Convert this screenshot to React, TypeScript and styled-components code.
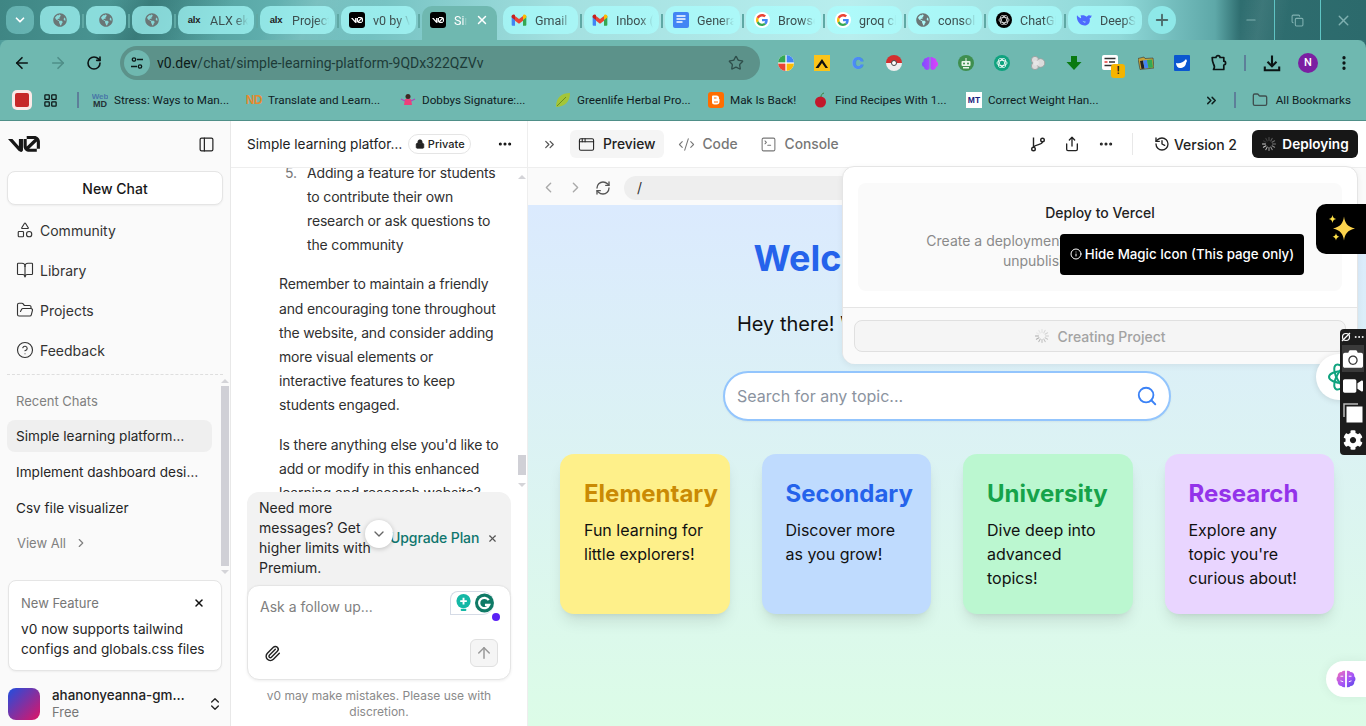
import React from "react";
import styled, { createGlobalStyle } from "styled-components";
import {
  ArrowLeft, ArrowRight, RotateCw, Star, Plus, Minus, X, Copy, EllipsisVertical,
  LayoutGrid, ChevronsRight, Folder, Shapes, BookOpen, FolderOpen, CircleHelp, PanelLeft, ChevronRight,
  ChevronLeft, ChevronsUpDown, ChevronDown, Paperclip, ArrowUp, CodeXml, SquareTerminal, AppWindow, Share,
  Ellipsis, History, RefreshCw, Lock, Search, Info, ChevronDown as Chevron,
} from "lucide-react";
import { FaGlobeAmericas, FaCog, FaCamera, FaVideo } from "react-icons/fa";

const Global = createGlobalStyle`
  html, body { margin: 0; padding: 0; background: #fff; }
  body { font-family: Inter, "Liberation Sans", sans-serif; color: #171717; }
  * { box-sizing: border-box; }
`;

const Page = styled.div`
  width: 1366px; height: 726px; overflow: hidden; display: flex; flex-direction: column;
`;

/* ---------- browser chrome ---------- */
const Chrome = styled.header`
  height: 121px; flex: none; display: flex; flex-direction: column;
  font-family: Roboto, "Noto Sans", sans-serif;
  background: linear-gradient(90deg, #4f9c9a 0, #6fb8b0 20px, #6fb8b0 1340px, #2c6a6c 1366px);
`;
const Strip = styled.div`
  height: 40px; flex: none; display: flex; align-items: flex-start; padding: 6px 0 0 6px; gap: 6px; position: relative;
  background:
    linear-gradient(115deg, transparent 0 8%, rgba(20,70,70,.35) 11%, transparent 17%),
    linear-gradient(115deg, transparent 0 20%, rgba(255,255,255,.12) 23%, transparent 28%),
    linear-gradient(100deg, transparent 0 90.500%, rgba(255,255,255,.07) 92%, transparent 94%),
    linear-gradient(90deg, #3f8684 0, #4f9c9a 170px, #6cbcbc 340px, #a3e0e0 560px, #b8eeee 850px, #8fd8d8 1120px, #5ea8a8 1215px, #2f6e70 1240px, #2c6a6c 1366px);
`;
const RoundBtn = styled.div<{ $w?: number }>`
  width: ${(p) => p.$w ?? 28}px; height: 28px; border-radius: 10px; flex: none;
  display: flex; align-items: center; justify-content: center; color: #fff;
  background: rgba(170,255,255,.35);
`;
const PlusBtn = styled(RoundBtn)`
  border-radius: 50%; color: #4d6a6a; background: #8ee8e8;
`;
const Tab = styled.div<{ $w: number; $sep?: boolean }>`
  width: ${(p) => p.$w}px; height: 28px; border-radius: 10px; flex: none; position: relative;
  display: flex; align-items: center; padding-left: 8px; gap: 8px;
  background: rgba(170,255,255,.68); font-size: 12.500px; color: #3d4f4f;
  &::after {
    content: ""; display: ${(p) => (p.$sep ? "block" : "none")}; position: absolute; right: -4px; top: 8px;
    width: 2px; height: 14px; background: #5fa8a4;
  }
`;
const TabIconCell = styled.span<{ $wide?: boolean }>`
  width: ${(p) => (p.$wide ? "24px" : "16px")}; display: flex; justify-content: center; flex: none;
`;
const TabLabel = styled.span`
  flex: 1; min-width: 0; overflow: hidden; white-space: nowrap; margin-right: 6px;
  -webkit-mask-image: linear-gradient(90deg, #000 65%, transparent 100%);
  mask-image: linear-gradient(90deg, #000 65%, transparent 100%);
`;
const ActiveLabel = styled(TabLabel)`
  margin-right: 0;
`;
const ActiveTab = styled.div`
  width: 75px; height: 34px; flex: none; display: flex; align-items: center; padding: 0 8px 6px 8px; gap: 8px;
  background: #6fb8b0; border-radius: 10px 10px 0 0; font-size: 12.500px; color: #fff;
`;
const WindowControls = styled.div`
  position: absolute; right: 0; top: 0; display: flex; height: 40px;
`;
const WinBtn = styled.div<{ $line?: boolean }>`
  width: 46px; height: 40px; display: flex; align-items: center; justify-content: center;
  color: #7fb0b0; border-left: ${(p) => (p.$line ? "1px solid #5fc4c4" : "0")};
`;
const Toolbar = styled.div`
  height: 41px; flex: none; display: flex; align-items: center; padding: 5px 4px 0 4px;
  background: #6fb8b0; border-radius: 8px 8px 0 0;
`;
const NavIcon = styled.div<{ $dim?: boolean }>`
  width: 36px; height: 36px; flex: none; display: flex; align-items: center; justify-content: center;
  color: ${(p) => (p.$dim ? "#4f8e88" : "#0b1414")};
`;
const GridIcon = styled(NavIcon)`
  width: 46px; height: 20px; margin: 0 4px 0 -5px;
`;
const Omnibox = styled.div`
  width: 640px; height: 34px; margin-left: 8px; flex: none; border-radius: 17px; background: #5c928a;
  display: flex; align-items: center; padding: 0 16px 0 4px; font-size: 14px; color: #0c1a18;
`;
const SiteBtn = styled.div`
  width: 26px; height: 26px; border-radius: 50%; background: #6fb8b0; display: flex; align-items: center;
  justify-content: center; margin-right: 7px; flex: none;
`;
const OmniText = styled.span`
  flex: 1;
  span { color: #1d3b38; }
`;
const Exts = styled.div`
  display: flex; margin-left: 8px;
`;
const ExtSlot = styled.div`
  width: 36px; height: 36px; flex: none; display: flex; align-items: center; justify-content: center; position: relative;
`;
const ToolSep = styled.div`
  width: 2px; height: 16px; background: #5d7f99; flex: none; margin: 0 8px;
`;
const Badge = styled.div`
  position: absolute; right: 3px; bottom: 3px; width: 14px; height: 14px; border-radius: 3px; background: #f5b400;
  font: 700 10px/14px Roboto, sans-serif; text-align: center; color: #222;
`;
const Avatar = styled.div`
  width: 20px; height: 20px; border-radius: 50%; background: #7b1fa2; color: #fff;
  font: 500 11px/20px Roboto, sans-serif; text-align: center;
`;
const Bookmarks = styled.div`
  height: 40px; flex: none; display: flex; align-items: center; padding: 0 0 1px 12px; font-size: 11.700px; color: #10201f;
  border-bottom: 1px solid #4f8f88; background: #6fb8b0; white-space: nowrap;
`;
const RecBtn = styled.div`
  width: 20px; height: 20px; border-radius: 5px; background: #fbe9e7; display: flex; align-items: center; justify-content: center; flex: none;
  &::after { content: ""; width: 14px; height: 14px; border-radius: 2px; background: #c62828; }
`;
const BarSep = styled.div`
  width: 2px; height: 16px; background: #5d7f99; flex: none; margin-right: 13px;
`;
const Mark = styled.div<{ $w: number }>`
  width: ${(p) => p.$w}px; flex: none; display: flex; align-items: center; gap: 6px;
`;
const MarkIcon = styled.div`
  width: 16px; height: 16px; flex: none; display: flex; align-items: center; justify-content: center; overflow: hidden;
`;
const BmGrow = styled.div`
  flex: 1; display: flex; align-items: center; justify-content: flex-end; padding-right: 15px;
`;
const MoreMarks = styled(ChevronsRight)`
  margin-right: 15px;
`;
const AllFolder = styled(Folder)`
  margin: 0 8px 0 3px;
`;

/* ---------- app ---------- */
const Main = styled.main`
  flex: 1; min-height: 0; display: flex;
`;
const Sidebar = styled.aside`
  width: 231px; flex: none; background: #fafafa; border-right: 1px solid #e8e8e8; display: flex; flex-direction: column;
  position: relative;
`;
const SideHead = styled.div`
  height: 44px; margin: 1px 0 5px; padding: 0 15px 0 8px; display: flex; align-items: center; justify-content: space-between; flex: none;
`;
const NewChat = styled.button`
  display: block; width: 216px; height: 34px; margin: 0 0 5px 7px; border: 1px solid #e5e5e5; border-radius: 8px; background: #fff; flex: none;
  font: 500 14px Inter, sans-serif; color: #171717; box-shadow: 0 1px 2px rgba(0,0,0,.05); padding: 0;
`;
const NavItem = styled.div`
  height: 40px; flex: none; display: flex; align-items: center; gap: 6px; padding-left: 16px; font-size: 14px; color: #333;
`;
const Dashed = styled.div`
  margin: 4px 7px 0; border-top: 1px dashed #dedede; flex: none;
`;
const SectionTitle = styled.div`
  margin: 18px 0 11px 16px; height: 16px; flex: none; font-size: 13px; line-height: 16px; color: #808080;
`;
const ChatItem = styled.div<{ $active?: boolean }>`
  height: 32px; flex: none; margin: 0 18px 4px 7px; padding: 0 9px; border-radius: 8px; display: flex; align-items: center;
  font-size: 13.600px; color: #262626; background: ${(p) => (p.$active ? "#efefef" : "transparent")}; white-space: nowrap;
`;
const ViewAll = styled.div`
  margin: 7px 0 0 17px; height: 16px; flex: none; display: flex; align-items: center; gap: 8px; font-size: 13px; color: #808080;
`;
const ScrollThumb = styled.div<{ $t: number; $h: number; $l: number }>`
  position: absolute; left: ${(p) => p.$l}px; top: ${(p) => p.$t}px; height: ${(p) => p.$h}px; width: 8px; background: #d0d0d6;
`;
const ScrollArrow = styled.div<{ $t: number; $l: number; $up?: boolean }>`
  position: absolute; left: ${(p) => p.$l}px; top: ${(p) => p.$t}px; width: 0; height: 0;
  border-left: 4px solid transparent; border-right: 4px solid transparent;
  ${(p) => (p.$up ? "border-bottom: 4px solid #d4d4d8;" : "border-top: 4px solid #d4d4d8;")}
`;
const FeatureCard = styled.div`
  margin: 29px 8px 0; height: 91px; border: 1px solid #e5e5e5; border-radius: 8px; background: #fff; padding: 14px 12px 0;
  box-shadow: 0 1px 2px rgba(0,0,0,.05); flex: none;
`;
const FeatureHead = styled.div`
  display: flex; align-items: center; justify-content: space-between; padding-right: 4px; font-size: 13px; color: #777; height: 16px;
`;
const FeatureText = styled.div`
  margin-top: 9px; font-size: 13.700px; line-height: 19.500px; color: #262626; white-space: nowrap;
`;
const UserRow = styled.div`
  margin-top: 16px; padding: 0 7px 0 8px; display: flex; align-items: center; gap: 12px; flex: none;
`;
const UserPic = styled.div`
  width: 32px; height: 32px; border-radius: 8px; flex: none; background: linear-gradient(135deg, #1f4fe0, #e01365);
`;
const UserText = styled.div`
  flex: 1; min-width: 0; display: flex; flex-direction: column;
`;
const UserName = styled.div`
  font-size: 13.400px; font-weight: 500; line-height: 17px; white-space: nowrap; color: #222;
`;
const UserPlan = styled.div`
  font-size: 13px; line-height: 16px; color: #777;
`;

const ChatCol = styled.section`
  width: 297px; flex: none; border-right: 1px solid #eee; display: flex; flex-direction: column; position: relative; background: #fff;
`;
const ChatHead = styled.div`
  height: 47px; flex: none; display: flex; align-items: center; padding: 0 14px 0 16px; border-bottom: 1px solid #eee; font-size: 13.600px; color: #222;
  white-space: nowrap;
`;
const Pill = styled.div`
  margin-left: 6px; width: 63px; height: 20px; border: 1px solid #e5e5e5; border-radius: 10px; font-size: 11px; font-weight: 500;
  display: flex; align-items: center; justify-content: center; gap: 3px; color: #222; flex: none;
`;
const HeadDots = styled.div`
  margin-left: auto; display: flex; align-items: center; color: #111;
`;
const Messages = styled.div`
  flex: 1; min-height: 0; overflow: hidden; font-size: 14px; line-height: 24.200px; letter-spacing: -.16px; color: #303030; padding: 0 27px 0 48px;
`;
const ListRow = styled.div`
  display: flex; margin-top: -7.500px; margin-left: 6px;
  b { font-weight: 400; color: #777; width: 22px; flex: none; }
`;
const Para = styled.p`
  margin: 15px 0 0;
`;
const Banner = styled.div`
  margin: 0 16px; height: 103px; flex: none; background: #f2f2f2; border-radius: 12px 12px 0 0; display: flex;
  padding: 6px 12px; font-size: 14px; line-height: 20px; color: #262626;
`;
const BannerText = styled.div`
  width: 121px; flex: none;
`;
const Upgrade = styled.div`
  margin-left: 10px; align-self: flex-start; margin-top: 30px; font-weight: 500; letter-spacing: -.1px; color: #0f766e; white-space: nowrap;
  display: flex; align-items: center; gap: 8px;
`;
const ScrollDown = styled.div`
  position: absolute; left: 134px; top: 399px; width: 28px; height: 28px; border-radius: 50%; background: #fff;
  box-shadow: 0 1px 5px rgba(0,0,0,.22); display: flex; align-items: center; justify-content: center; color: #666;
`;
const Composer = styled.div`
  margin: -10px 16px 0; height: 95px; flex: none; background: #fff; border: 1px solid #e5e5e5; border-radius: 12px; position: relative;
  box-shadow: 0 1px 3px rgba(0,0,0,.07); padding: 13px 12px; font-size: 14px; line-height: 16px; color: #808080;
`;
const ComposerBar = styled.div`
  position: absolute; left: 16px; right: 12px; bottom: 12px; display: flex; align-items: center; justify-content: space-between; color: #222;
`;
const SendBtn = styled.div`
  width: 28px; height: 28px; border-radius: 6px; background: #f5f5f5; border: 1px solid #e0e0e0; color: #999; display: flex; align-items: center; justify-content: center;
`;
const Grammarly = styled.div`
  position: absolute; left: 202px; top: 5px; width: 44px; height: 24px; border: 1px solid #d5dbe6; border-right: 0; border-radius: 8px 12px 12px 0;
  background: #fff; display: flex; align-items: center; gap: 3px; padding-left: 4px;
`;
const Dot = styled.div`
  position: absolute; left: 244px; top: 27px; width: 8px; height: 8px; border-radius: 50%; background: #5b21f5;
`;
const Disclaimer = styled.div`
  flex: none; height: 46px; padding: 8px 24px 0; text-align: center; font-size: 12px; line-height: 16px; color: #8a8a8a;
`;

const Preview = styled.section`
  flex: 1; min-width: 0; display: flex; flex-direction: column; position: relative;
`;
const PreviewHead = styled.div`
  height: 46px; flex: none; display: flex; align-items: center; padding: 0 8px 0 14px; background: #fff; font-size: 14px;
`;
const Tabs = styled.div`
  display: flex; align-items: center; margin-left: 13px; flex: 1;
`;
const ViewTab = styled.div<{ $on?: boolean }>`
  height: 28px; border-radius: 6px; padding: 0 8px; display: flex; align-items: center; gap: 8px; margin-right: 6px; font-weight: 500; font-size: 13.800px;
  background: ${(p) => (p.$on ? "#f5f5f5" : "transparent")}; color: ${(p) => (p.$on ? "#222" : "#777")};
`;
const IconBtn = styled.div`
  width: 34px; display: flex; justify-content: center; color: #222;
`;
const VSep = styled.div`
  width: 1px; height: 22px; background: #e8e8e8; margin: 0 21px 0 9px;
`;
const VersionBtn = styled.div`
  display: flex; align-items: center; gap: 4px; font-weight: 500; color: #222; margin-right: 15px;
`;
const DeployBtn = styled.div`
  width: 106px; height: 28px; border-radius: 6px; background: #171717; color: #fff; font-weight: 600; font-size: 13.600px; display: flex; align-items: center; justify-content: center; gap: 5px;
`;
const AddrBar = styled.div`
  height: 38px; flex: none; background: #fafafa; border-top: 1px solid #eee; display: flex; align-items: center; padding: 2px 12px 0 7px;
`;
const UrlPill = styled.div`
  flex: 1; height: 24px; border-radius: 12px; background: #eee; padding-left: 13px; margin-left: 8px; font-size: 14px; line-height: 24px; color: #333;
`;
const AddrBtn = styled.div<{ $dark?: boolean }>`
  width: 27px; display: flex; justify-content: center; color: ${(p) => (p.$dark ? "#555" : "#aaa")};
`;
const Canvas = styled.div`
  flex: 1; min-height: 0; background: linear-gradient(180deg, #dbeafe, #dcfce7); display: flex; flex-direction: column; align-items: center; padding: 33px 32px 0;
  overflow: hidden;
`;
const Hero = styled.h1`
  margin: 0 0 0 6px; font-size: 36px; line-height: 40px; font-weight: 700; color: #2563eb; white-space: nowrap;
`;
const Sub = styled.p`
  margin: 32px 0 0; font-size: 20px; line-height: 28px; color: #111; white-space: nowrap;
`;
const SearchBox = styled.div`
  margin: 33px 0 0; width: 448px; height: 50px; flex: none; border: 2px solid #93c5fd; border-radius: 25px; background: #fff; display: flex; align-items: center;
  justify-content: space-between; padding: 0 11px 0 12px; font-size: 16px; color: #8b93a0;
  box-shadow: 0 1px 2px rgba(0,0,0,.05);
`;
const Cards = styled.div`
  margin-top: 33px; width: 100%; display: grid; grid-template-columns: repeat(4, minmax(0, 1fr)); gap: 32px;
`;
const Card = styled.div<{ $bg: string; $fg: string }>`
  height: 160px; border-radius: 14px; padding: 24px; background: ${(p) => p.$bg};
  box-shadow: 0 10px 15px -3px rgba(0,0,0,.1), 0 4px 6px -4px rgba(0,0,0,.1);
  h3 { margin: 0 0 8px; font-size: 24px; line-height: 32px; font-weight: 700; color: ${(p) => p.$fg}; white-space: nowrap; }
  p { margin: 0; font-size: 16px; line-height: 24px; color: #111; }
`;
const Popover = styled.div`
  position: absolute; right: 8px; top: 45px; width: 516px; height: 198px; background: #fff; border: 1px solid #e5e5e5; border-radius: 12px 12px 0 12px;
  box-shadow: 0 2px 6px rgba(0,0,0,.06); display: flex; flex-direction: column;
`;
const PopBody = styled.div`
  margin: 16px 15px; height: 108px; flex: none; border-radius: 8px; background: #fafafa; display: flex; flex-direction: column; align-items: center; padding-top: 21px;
  text-align: center;
`;
const PopTitle = styled.div`
  font-size: 14px; font-weight: 500; line-height: 17px; color: #222;
`;
const PopText = styled.div`
  margin-top: 10px; width: 360px; font-size: 14px; line-height: 20px; color: #8a8a8a; white-space: nowrap;
`;
const PopFoot = styled.div`
  flex: 1; border-top: 1px solid #e5e5e5; padding: 12px 11px; background: #fafafa; border-radius: 0 0 12px 12px;
`;
const PopBtn = styled.div`
  height: 32px; border: 1px solid #e0e0e0; border-radius: 8px; background: #f5f5f5; display: flex; align-items: center; justify-content: center; gap: 7px;
  font-size: 14px; font-weight: 500; color: #a3a3a3;
`;
const Tip = styled.div`
  position: absolute; left: 532px; top: 113px; width: 244px; height: 41px; padding-bottom: 1px; background: #000; border-radius: 4px; color: #fff; font-size: 13.300px; font-weight: 500;
  display: flex; align-items: center; justify-content: center; gap: 3px; white-space: nowrap;
`;
const Magic = styled.div`
  position: absolute; right: 0; top: 83px; width: 50px; height: 50px; background: #000; border-radius: 10px 0 0 10px; display: flex; align-items: center; padding-left: 11px;
`;
const SideOrb = styled.div`
  position: absolute; right: 0; top: 233px; width: 50px; height: 46px; border-radius: 23px 0 0 23px; background: #fff; box-shadow: 0 1px 6px rgba(0,0,0,.12);
  display: flex; align-items: center; padding-left: 10px; overflow: hidden;
`;
const ToolDock = styled.div`
  position: absolute; right: 0; top: 208px; width: 26px; height: 126px; background: #1c1c1c; border-radius: 4px 0 0 4px; color: #fff;
  display: flex; flex-direction: column; align-items: center;
`;
const DockTop = styled.div`
  height: 16px; flex: none; display: flex; align-items: center; gap: 2px; color: #fff;
`;
const DockBtn = styled.div<{ $on?: boolean }>`
  width: 22px; height: 27px; flex: none; display: flex; align-items: center; justify-content: center; background: ${(p) => (p.$on ? "#3a3a3a" : "transparent")};
`;
const BrainBtn = styled.div`
  position: absolute; right: 0; top: 540px; width: 40px; height: 36px; border-radius: 18px 0 0 18px; background: #fff; display: flex; align-items: center; padding-left: 9px;
  box-shadow: 0 0 12px rgba(0,0,0,.06);
`;

/* ---------- drawings ---------- */
const V0 = ({ w = 16, color = "#000" }: { w?: number; color?: string }) => (
  <svg width={w} viewBox="0 0 40 20" fill={color}>
    <path d="M23.39 0h9.53c3.86 0 6.99 3.13 6.99 7v9.08h-3.91V7c0-.09 0-.18-.01-.28l-9.53 9.36h.1h9.44v3.7h-9.44c-3.86 0-7.08-3.16-7.08-7.03V3.69h3.91v9.06c0 .18.01.35.04.52l9.74-9.57c-.08-.01-.17-.01-.25-.01h-9.53z" />
    <path d="M13.77 19.1L0 3.69h5.54l8.08 9.05V3.69h5.1v13.88c0 2.1-2.6 3.08-3.99 1.52z" />
  </svg>
);
const Fav16 = styled.div`
  width: 16px; height: 16px; flex: none; display: flex; align-items: center; justify-content: center; background: #000; border-radius: 3px;
`;
const V0Fav = () => <Fav16><V0 w={12} color="#fff" /></Fav16>;
const AlxFav = styled.span`
  width: 16px; flex: none; font: 800 9.500px/16px "Liberation Sans", sans-serif; color: #222; text-align: center; letter-spacing: -.3px;
`;
const GlobeFav = () => <FaGlobeAmericas size={14} color="#6a7676" />;
const Gmail = () => (
  <svg width="16" height="16" viewBox="0 0 24 24">
    <path fill="#4285F4" d="M1 6v13c0 1 .7 1.700 1.600 1.700H6V11z" />
    <path fill="#34A853" d="M23 6v13c0 1-.7 1.700-1.600 1.700H18V11z" />
    <path fill="#EA4335" d="M6 13V6l6 4.600L18 6v7l-6 4.600z" />
    <path fill="#C5221F" d="M1 6.300C1 4 3.600 2.800 5.300 4.100L6 4.700V12L1 8.300z" />
    <path fill="#FBBC04" d="M23 6.300C23 4 20.400 2.800 18.700 4.100L18 4.700V12l5-3.700z" />
  </svg>
);
const GFav = () => (
  <svg width="16" height="16" viewBox="0 0 48 48">
    <circle cx="24" cy="24" r="24" fill="#fff" />
    <g transform="translate(6 6) scale(.75)">
      <path fill="#EA4335" d="M24 9.500c3.500 0 6.700 1.200 9.200 3.600l6.900-6.900C35.900 2.400 30.500 0 24 0 14.600 0 6.500 5.400 2.600 13.200l8 6.200C12.400 13.700 17.700 9.500 24 9.500z" />
      <path fill="#4285F4" d="M46.900 24.500c0-1.600-.1-3.100-.4-4.500H24v9h12.900c-.6 3-2.200 5.500-4.700 7.200l7.700 6c4.500-4.200 7-10.300 7-17.700z" />
      <path fill="#FBBC05" d="M10.500 28.600c-.5-1.400-.8-3-.8-4.600s.3-3.200.8-4.600l-8-6.200C.9 16.500 0 20.100 0 24s.9 7.500 2.600 10.800z" />
      <path fill="#34A853" d="M24 48c6.500 0 11.900-2.100 15.900-5.800l-7.700-6c-2.200 1.400-4.900 2.300-8.200 2.300-6.300 0-11.600-4.200-13.500-10l-8 6.200C6.500 42.600 14.600 48 24 48z" />
    </g>
  </svg>
);
const DocsFav = () => (
  <svg width="16" height="16" viewBox="0 0 16 16">
    <rect width="16" height="16" rx="2" fill="#4285f4" />
    <path d="M3.500 4h9M3.500 7h9M3.500 10h6" stroke="#fff" strokeWidth="1.400" />
  </svg>
);
const KnotFav = ({ bg, line }: { bg: string; line: string }) => (
  <svg width="16" height="16" viewBox="0 0 16 16">
    <circle cx="8" cy="8" r="8" fill={bg} />
    <g fill="none" stroke={line} strokeWidth=".8">
      <ellipse cx="8" cy="8" rx="5" ry="2.600" />
      <ellipse cx="8" cy="8" rx="5" ry="2.600" transform="rotate(60 8 8)" />
      <ellipse cx="8" cy="8" rx="5" ry="2.600" transform="rotate(120 8 8)" />
    </g>
  </svg>
);
const Whale = () => (
  <svg width="16" height="14" viewBox="0 0 24 20" fill="#4d6bfe">
    <path d="M23 3c-.6-.3-1 .3-1.400.6-.4-.5-1-.8-1.600-.8-1.500 0-3 1-4 2.300C14 3 10 2 6.500 3.500 8 5 8 6.500 7 7.500 5 6.500 3 5 1.500 3 .5 8 3 15 9 17.500c4 1.600 9 .5 11-3.500 1-2 1-4.500.5-7 1 .2 2-.4 2.500-2 .2-.8.2-2 0-2.500zM13.500 14c-1.500-.6-3-1.800-4-3 2 1 4 1.600 5.500 1.400z" />
  </svg>
);
const Spinner = ({ size = 16, color = "#fff" }: { size?: number; color?: string }) => (
  <svg width={size} height={size} viewBox="0 0 16 16" stroke={color} strokeWidth="1" strokeLinecap="round">
    {Array.from({ length: 12 }).map((_, i) => (
      <line key={i} x1="8" y1="1.500" x2="8" y2="4.500" opacity={0.12 + (i / 12) * 0.75} transform={`rotate(${i * 30 - 60} 8 8)`} />
    ))}
  </svg>
);
const Sparkles = () => (
  <svg width="30" height="30" viewBox="0 0 30 30" fill="#fde047">
    <path d="M17 2.500c1 7 3.500 10 11 12-7.500 2-10 5-11 12-1-7-3.500-10-11-12 7.500-2 10-5 11-12z" fill="#fcd34d" />
    <path d="M5.500 1c.4 2.400 1.300 3.400 3.700 4-2.400.6-3.300 1.600-3.700 4-.4-2.400-1.300-3.400-3.700-4 2.400-.6 3.300-1.600 3.700-4zM9 19c.4 2.300 1.200 3.200 3.400 3.800-2.200.6-3 1.500-3.400 3.800-.4-2.300-1.200-3.200-3.400-3.800 2.200-.6 3-1.500 3.400-3.800z" />
  </svg>
);
const BrainIcon = () => (
  <svg width="22" height="22" viewBox="0 0 24 24">
    <defs><linearGradient id="br" x1="0" x2="1" y1="0" y2="1"><stop offset="0" stopColor="#f472b6" /><stop offset=".55" stopColor="#a855f7" /><stop offset="1" stopColor="#4f46e5" /></linearGradient></defs>
    <path fill="url(#br)" d="M11 3a4 4 0 0 0-4 1.500A4 4 0 0 0 3 9a4 4 0 0 0 0 6 4 4 0 0 0 4 4.500A4 4 0 0 0 11 21zM13 3a4 4 0 0 1 4 1.500A4 4 0 0 1 21 9a4 4 0 0 1 0 6 4 4 0 0 1-4 4.500A4 4 0 0 1 13 21z" />
    <path d="M6 9h3M6 14l3 1M18 9h-3M18 14l-3 1" stroke="#fff" strokeWidth="1" />
  </svg>
);
const Atom = () => (
  <svg width="34" height="34" viewBox="0 0 34 34" fill="none" stroke="#10a37f" strokeWidth="2">
    <ellipse cx="17" cy="17" rx="14" ry="6" />
    <ellipse cx="17" cy="17" rx="14" ry="6" transform="rotate(60 17 17)" />
    <ellipse cx="17" cy="17" rx="14" ry="6" transform="rotate(120 17 17)" />
  </svg>
);
const GitFork = () => (
  <svg width="16" height="16" viewBox="0 0 16 16" fill="none" stroke="#222" strokeWidth="1.400">
    <circle cx="3.500" cy="13" r="1.800" />
    <circle cx="12.500" cy="4" r="1.800" />
    <path d="M3.500 1.500V11.200M12.500 5.800c0 3.500-7 2-9 5.400" />
  </svg>
);
const CopyStack = () => (
  <svg width="22" height="22" viewBox="0 0 22 22">
    <path d="M2 15V2h14" fill="none" stroke="#bbb" strokeWidth="1.500" />
    <rect x="4.500" y="4.500" width="16" height="16" fill="#fff" />
  </svg>
);
const DockLogo = () => (
  <svg width="10" height="10" viewBox="0 0 10 10" fill="none" stroke="#fff" strokeWidth="1.200">
    <circle cx="5" cy="5" r="3.500" /><path d="M1 9L9 1" />
  </svg>
);
const Bulb = () => (
  <svg width="18" height="20" viewBox="0 0 18 20">
    <circle cx="9" cy="8" r="7.500" fill="#14b8a6" />
    <path d="M9 4.500v7M5.500 8h7" stroke="#fff" strokeWidth="2" />
    <rect x="6" y="16" width="6" height="2.500" rx="1" fill="#14b8a6" />
  </svg>
);
const GrammarlyG = () => (
  <svg width="20" height="20" viewBox="0 0 20 20">
    <circle cx="10" cy="10" r="10" fill="#0f7a66" />
    <path d="M14.500 7A5.500 5.500 0 1 0 15 12h-4.500" fill="none" stroke="#fff" strokeWidth="2.400" />
  </svg>
);

/* toolbar extensions */
const ExtGoogle = () => (
  <svg width="16" height="16" viewBox="0 0 16 16">
    <clipPath id="c1"><circle cx="8" cy="8" r="8" /></clipPath>
    <g clipPath="url(#c1)">
      <rect width="16" height="16" fill="#fff" />
      <rect width="7.400" height="7.400" fill="#34a853" />
      <rect x="8.600" width="8" height="7.400" fill="#4285f4" />
      <rect y="8.600" width="7.400" height="8" fill="#ea4335" />
      <rect x="8.600" y="8.600" width="8" height="8" fill="#fbbc04" />
    </g>
  </svg>
);
const ExtYellow = () => (
  <svg width="16" height="16" viewBox="0 0 16 16">
    <rect width="16" height="16" fill="#fcc419" />
    <path d="M1.500 13L8 4l6 9h-2.500L8 8l-3.500 5z" fill="#111" />
  </svg>
);
const ExtC = styled.span`
  font: 900 16px/16px Inter, sans-serif; color: #4b8bf5;
`;
const ExtPoke = () => (
  <svg width="16" height="16" viewBox="0 0 16 16">
    <path d="M0 8a8 8 0 0 1 16 0z" fill="#d32f2f" />
    <path d="M0 8a8 8 0 0 0 16 0z" fill="#eee" />
    <circle cx="8" cy="8" r="2.500" fill="#fff" stroke="#444" />
  </svg>
);
const ExtBrain = () => (
  <svg width="16" height="16" viewBox="0 0 16 16">
    <defs><linearGradient id="eb" x1="0" x2="1"><stop offset="0" stopColor="#7c4dff" /><stop offset="1" stopColor="#e040fb" /></linearGradient></defs>
    <path fill="url(#eb)" d="M7.500 2a3 3 0 0 0-3 1 3 3 0 0 0-3 3.500A3 3 0 0 0 2 12a3 3 0 0 0 5.500 1.500zM8.500 2a3 3 0 0 1 3 1 3 3 0 0 1 3 3.500A3 3 0 0 1 14 12a3 3 0 0 1-5.500 1.500z" />
  </svg>
);
const ExtBot = () => (
  <svg width="16" height="16" viewBox="0 0 16 16">
    <circle cx="8" cy="8" r="8" fill="#3f8f4f" />
    <rect x="3.500" y="6" width="9" height="5" rx="1" fill="#e8f5e9" />
    <circle cx="6" cy="8.500" r="1" fill="#3f8f4f" /><circle cx="10" cy="8.500" r="1" fill="#3f8f4f" />
    <rect x="7.500" y="3" width="1" height="3" fill="#e8f5e9" />
    <rect x="5" y="12" width="6" height="1.500" fill="#e8f5e9" />
  </svg>
);
const ExtBlob = () => (
  <svg width="16" height="16" viewBox="0 0 16 16" fill="#dcdcdc" stroke="#9a9a9a" strokeWidth=".8">
    <circle cx="5" cy="5" r="3.600" />
    <circle cx="5" cy="11" r="3.600" />
    <circle cx="10.500" cy="8" r="4.300" />
    <circle cx="6" cy="8" r="2.800" fill="#e6e6e6" stroke="none" />
  </svg>
);
const ExtDown = () => (
  <svg width="16" height="16" viewBox="0 0 16 16"><path d="M5 1h6v6h4.500L8 15 .5 7H5z" fill="#0a7a12" /></svg>
);
const ExtList = () => (
  <svg width="16" height="16" viewBox="0 0 16 16">
    <rect width="16" height="15" rx="2" fill="#fff" />
    <path d="M2.500 3.500h11" stroke="#333" strokeWidth="1.500" /><path d="M2.500 7h3" stroke="#e53935" strokeWidth="1.500" /><path d="M7 7h6" stroke="#333" strokeWidth="1.500" /><path d="M2.500 10.500h8" stroke="#333" strokeWidth="1.500" />
  </svg>
);
const ExtFolder = () => (
  <svg width="16" height="16" viewBox="0 0 16 16">
    <path d="M0 3.500l6-1.500 1 1.500 8-.5 1 10-14 1.500z" fill="#c6a43a" stroke="#333" strokeWidth=".6" />
    <path d="M2 6l3-.5 1.500 8-3 .5z" fill="#222" /><path d="M5 5.500l4-.5 1.500 8-4 .5z" fill="#4285f4" /><path d="M9 5l5-.5 1 8-4.500.5z" fill="#34a853" />
  </svg>
);
const ExtBlue = () => (
  <svg width="16" height="16" viewBox="0 0 16 16">
    <rect width="16" height="16" rx="1" fill="#0b57d0" />
    <path d="M2 8c3 1 7 0 10-4l1 2-1 2c0 3-3 5-6 5-2 0-4-2-4-5z" fill="#fff" />
  </svg>
);
const ExtPuzzle = () => (
  <svg width="18" height="18" viewBox="0 0 18 18" fill="none" stroke="#0b1414" strokeWidth="1.700" strokeLinejoin="round">
    <path d="M3.200 3.500H7c0-2.600 4-2.600 4 0h3.800v3.700c2.400 0 2.400 3.800 0 3.800v4.500H4.500c1.200-1.700 1.200-3.600 0-5.500-.9-1.600-1.300-3.900-1.300-6.500z" />
  </svg>
);
const ChromeDownload = () => (
  <svg width="18" height="18" viewBox="0 0 18 18" fill="none" stroke="#0b1414" strokeWidth="2.100">
    <path d="M9 1.500v10.500M4.500 7.800L9 12.300l4.500-4.500M1.800 12.500v3.700h14.400v-3.700" />
  </svg>
);
const WebMd = styled.span`
  font: 700 8px/7px "Liberation Sans", sans-serif; color: #4a79a8; text-align: center; display: block;
  em { display: block; font-style: normal; color: #263238; font-size: 9px; line-height: 8px; }
`;
const Nd = styled.span`
  font: 700 12px/16px "Liberation Sans", sans-serif; color: #e58a2f; letter-spacing: -.5px;
`;
const Person = () => (
  <svg width="16" height="16" viewBox="0 0 16 16">
    <circle cx="8" cy="4.500" r="2.500" fill="#3e2723" /><path d="M5 7h6l1 6H4z" fill="#ec407a" /><path d="M1 7l4 2M15 7l-4 2" stroke="#ab47bc" strokeWidth="1.200" />
  </svg>
);
const Leaf = () => (
  <svg width="16" height="16" viewBox="0 0 16 16">
    <path d="M15 1C7 1 1 5 1 15c8 0 14-5 14-14z" fill="#a4c639" /><path d="M2 14L11 5" stroke="#6a8e1f" />
  </svg>
);
const Blogger = () => (
  <svg width="16" height="16" viewBox="0 0 16 16">
    <rect width="16" height="16" rx="3" fill="#ff6d00" />
    <path d="M5 3.500h3.500A2.500 2.500 0 0 1 11 6v1h.5v2.500a3 3 0 0 1-3 3h-2a2.500 2.500 0 0 1-2.500-2.500V4.500a1 1 0 0 1 1-1z" fill="#fff" />
    <path d="M6 6h2.500M6 10h4" stroke="#ff6d00" strokeWidth="1.200" />
  </svg>
);
const Cherry = () => (
  <svg width="16" height="16" viewBox="0 0 16 16">
    <circle cx="7.500" cy="10" r="5.500" fill="#c2182b" /><path d="M8 5c0-2 1-3.500 3-4" stroke="#3e7d3a" strokeWidth="1" fill="none" />
  </svg>
);
const Mt = styled.span`
  width: 16px; height: 16px; background: #fff; font: 800 8.500px/16px "Liberation Sans", sans-serif; text-align: center; color: #1a237e; display: block;
`;

const tabData: { w: number; label?: string; icon: React.ReactNode }[] = [
  { w: 40, icon: <GlobeFav /> },
  { w: 40, icon: <GlobeFav /> },
  { w: 40, icon: <GlobeFav /> },
  { w: 76, label: "ALX ekosystem", icon: <AlxFav>alx</AlxFav> },
  { w: 75, label: "Project Tasks", icon: <AlxFav>alx</AlxFav> },
  { w: 75, label: "v0 by Vercel", icon: <V0Fav /> },
];
const tabData2: { w: number; label: string; icon: React.ReactNode }[] = [
  { w: 75, label: "Gmail", icon: <Gmail /> },
  { w: 75, label: "Inbox (12)", icon: <Gmail /> },
  { w: 75, label: "General", icon: <DocsFav /> },
  { w: 75, label: "Browser", icon: <GFav /> },
  { w: 75, label: "groq cloud", icon: <GFav /> },
  { w: 74, label: "console", icon: <GlobeFav /> },
  { w: 74, label: "ChatGPT", icon: <KnotFav bg="#000" line="#ddd" /> },
  { w: 74, label: "DeepSeek", icon: <Whale /> },
];
const extensions: React.ReactNode[] = [
  <ExtGoogle />, <ExtYellow />, <ExtC>C</ExtC>, <ExtPoke />, <ExtBrain />, <ExtBot />, <KnotFav bg="#10a37f" line="#fff" />, <ExtBlob />, <ExtDown />,
  <><ExtList /><Badge>!</Badge></>, <ExtFolder />, <ExtBlue />, <ExtPuzzle />,
];
const marks: { w: number; icon: React.ReactNode; text: string }[] = [
  { w: 154, icon: <WebMd>Web<em>MD</em></WebMd>, text: "Stress: Ways to Man..." },
  { w: 154, icon: <Nd>ND</Nd>, text: "Translate and Learn..." },
  { w: 155, icon: <Person />, text: "Dobbys Signature:..." },
  { w: 153, icon: <Leaf />, text: "Greenlife Herbal Pro..." },
  { w: 105, icon: <Blogger />, text: "Mak Is Back!" },
  { w: 153, icon: <Cherry />, text: "Find Recipes With 1..." },
  { w: 150, icon: <Mt>MT</Mt>, text: "Correct Weight Han..." },
];
const cards = [
  { bg: "#fef08a", fg: "#ca8a04", t: "Elementary", d: "Fun learning for little explorers!" },
  { bg: "#bfdbfe", fg: "#2563eb", t: "Secondary", d: "Discover more as you grow!" },
  { bg: "#bbf7d0", fg: "#16a34a", t: "University", d: "Dive deep into advanced topics!" },
  { bg: "#e9d5ff", fg: "#9333ea", t: "Research", d: "Explore any topic you're curious about!" },
];

export default function App() {
  return (
    <Page>
      <Global />
      <Chrome>
        <Strip>
          <RoundBtn><Chevron size={14} strokeWidth={3} /></RoundBtn>
          {tabData.map((t, i) => (
            <Tab key={i} $w={t.w} $sep>
              <TabIconCell $wide={i < 3}>{t.icon}</TabIconCell>
              {t.label && <TabLabel>{t.label}</TabLabel>}
            </Tab>
          ))}
          <ActiveTab>
            <V0Fav />
            <ActiveLabel>Simple learning</ActiveLabel>
            <X size={14} color="#fff" strokeWidth={2.5} />
          </ActiveTab>
          {tabData2.map((t, i) => (
            <Tab key={i} $w={t.w} $sep={i < 7}>
              {t.icon}
              <TabLabel>{t.label}</TabLabel>
            </Tab>
          ))}
          <PlusBtn><Plus size={18} strokeWidth={2.5} /></PlusBtn>
          <WindowControls>
            <WinBtn><Minus size={14} /></WinBtn>
            <WinBtn $line><Copy size={13} /></WinBtn>
            <WinBtn $line><X size={17} /></WinBtn>
          </WindowControls>
        </Strip>
        <Toolbar>
          <NavIcon><ArrowLeft size={18} strokeWidth={2.2} /></NavIcon>
          <NavIcon $dim><ArrowRight size={18} strokeWidth={2.2} /></NavIcon>
          <NavIcon><RotateCw size={16} strokeWidth={2.4} /></NavIcon>
          <Omnibox>
            <SiteBtn>
              <svg width="14" height="14" viewBox="0 0 14 14" fill="none" stroke="#0c1a18" strokeWidth="1.300">
                <circle cx="4" cy="3.500" r="1.700" /><path d="M7 3.500h6M1 10.500h6" /><circle cx="10" cy="10.500" r="1.700" />
              </svg>
            </SiteBtn>
            <OmniText>v0.dev<span>/chat/simple-learning-platform-9QDx322QZVv</span></OmniText>
            <Star size={16} color="#2f4f4b" />
          </Omnibox>
          <Exts>
            {extensions.map((e, i) => <ExtSlot key={i}>{e}</ExtSlot>)}
          </Exts>
          <ToolSep />
          <ExtSlot><ChromeDownload /></ExtSlot>
          <ExtSlot><Avatar>N</Avatar></ExtSlot>
          <ExtSlot><EllipsisVertical size={18} color="#0b1414" strokeWidth={2.4} /></ExtSlot>
        </Toolbar>
        <Bookmarks>
          <RecBtn />
          <GridIcon><LayoutGrid size={15} strokeWidth={2} /></GridIcon>
          <BarSep />
          {marks.map((m) => (
            <Mark key={m.text} $w={m.w}>
              <MarkIcon>{m.icon}</MarkIcon>
              <span>{m.text}</span>
            </Mark>
          ))}
          <BmGrow>
            <MoreMarks size={15} color="#10201f" strokeWidth={2.4} />
            <BarSep />
            <AllFolder size={16} color="#3f4f4f" />
            <span>All Bookmarks</span>
          </BmGrow>
        </Bookmarks>
      </Chrome>

      <Main>
        <Sidebar>
          <SideHead>
            <V0 w={32} color="#171717" />
            <PanelLeft size={17} color="#222" strokeWidth={1.7} />
          </SideHead>
          <NewChat>New Chat</NewChat>
          <NavItem><Shapes size={18} strokeWidth={1.5} />Community</NavItem>
          <NavItem><BookOpen size={18} strokeWidth={1.5} />Library</NavItem>
          <NavItem><FolderOpen size={18} strokeWidth={1.5} />Projects</NavItem>
          <NavItem><CircleHelp size={18} strokeWidth={1.5} />Feedback</NavItem>
          <Dashed />
          <SectionTitle>Recent Chats</SectionTitle>
          <ChatItem $active>Simple learning platform…</ChatItem>
          <ChatItem>Implement dashboard desi…</ChatItem>
          <ChatItem>Csv file visualizer</ChatItem>
          <ViewAll>View All <ChevronRight size={14} /></ViewAll>
          <FeatureCard>
            <FeatureHead>New Feature <X size={12} color="#111" strokeWidth={3} /></FeatureHead>
            <FeatureText>v0 now supports tailwind<br />configs and globals.css files</FeatureText>
          </FeatureCard>
          <UserRow>
            <UserPic />
            <UserText>
              <UserName>ahanonyeanna-gm…</UserName>
              <UserPlan>Free</UserPlan>
            </UserText>
            <ChevronsUpDown size={16} color="#222" />
          </UserRow>
          <ScrollArrow $l={221} $t={258} $up />
          <ScrollThumb $l={221} $t={265} $h={180} />
          <ScrollArrow $l={221} $t={449} />
        </Sidebar>

        <ChatCol>
          <ChatHead>
            Simple learning platfor…
            <Pill><Lock size={10} fill="#222" />Private</Pill>
            <HeadDots><Ellipsis size={16} strokeWidth={2.6} /></HeadDots>
          </ChatHead>
          <Messages>
            <ListRow>
              <b>5.</b>
              <div>Adding a feature for students to contribute their own research or ask questions to the community</div>
            </ListRow>
            <Para>Remember to maintain a friendly and encouraging tone throughout the website, and consider adding more visual elements or interactive features to keep students engaged.</Para>
            <Para>Is there anything else you'd like to add or modify in this enhanced learning and research website?</Para>
          </Messages>
          <Banner>
            <BannerText>Need more messages? Get higher limits with Premium.</BannerText>
            <Upgrade>Upgrade Plan <X size={11} color="#555" strokeWidth={2.5} /></Upgrade>
          </Banner>
          <ScrollDown><ChevronDown size={16} /></ScrollDown>
          <Composer>
            Ask a follow up...
            <Grammarly>
              <Bulb />
              <GrammarlyG />
            </Grammarly>
            <Dot />
            <ComposerBar>
              <Paperclip size={17} />
              <SendBtn><ArrowUp size={18} /></SendBtn>
            </ComposerBar>
          </Composer>
          <Disclaimer>v0 may make mistakes. Please use with discretion.</Disclaimer>
          <ScrollArrow $l={287} $t={54} $up />
          <ScrollThumb $l={287} $t={334} $h={20} />
          <ScrollArrow $l={287} $t={362} />
        </ChatCol>

        <Preview>
          <PreviewHead>
            <ChevronsRight size={15} color="#555" />
            <Tabs>
              <ViewTab $on><AppWindow size={17} strokeWidth={1.5} />Preview</ViewTab>
              <ViewTab><CodeXml size={17} strokeWidth={1.5} />Code</ViewTab>
              <ViewTab><SquareTerminal size={17} strokeWidth={1.5} />Console</ViewTab>
            </Tabs>
            <IconBtn><GitFork /></IconBtn>
            <IconBtn><Share size={16} /></IconBtn>
            <IconBtn><Ellipsis size={16} strokeWidth={2.6} /></IconBtn>
            <VSep />
            <VersionBtn><History size={16} />Version 2</VersionBtn>
            <DeployBtn><Spinner />Deploying</DeployBtn>
          </PreviewHead>
          <AddrBar>
            <AddrBtn><ChevronLeft size={17} /></AddrBtn>
            <AddrBtn><ChevronRight size={17} /></AddrBtn>
            <AddrBtn $dark><RefreshCw size={16} /></AddrBtn>
            <UrlPill>/</UrlPill>
          </AddrBar>
          <Canvas>
            <Hero>Welcome to LearnJoy!</Hero>
            <Sub>Hey there! What do you want to learn today?</Sub>
            <SearchBox>Search for any topic...<Search size={22} color="#3b82f6" strokeWidth={2} /></SearchBox>
            <Cards>
              {cards.map((c) => (
                <Card key={c.t} $bg={c.bg} $fg={c.fg}>
                  <h3>{c.t}</h3>
                  <p>{c.d}</p>
                </Card>
              ))}
            </Cards>
          </Canvas>
          <Popover>
            <PopBody>
              <PopTitle>Deploy to Vercel</PopTitle>
              <PopText>Create a deployment to share your projects. You can<br />unpublish at any time as well.</PopText>
            </PopBody>
            <PopFoot>
              <PopBtn><Spinner color="#999" />Creating Project</PopBtn>
            </PopFoot>
          </Popover>
          <Tip><Info size={12} />Hide Magic Icon (This page only)</Tip>
          <Magic><Sparkles /></Magic>
          <SideOrb><Atom /></SideOrb>
          <ToolDock>
            <DockTop><DockLogo /><Ellipsis size={12} /></DockTop>
            <DockBtn $on><FaCamera size={20} color="#fff" /></DockBtn>
            <DockBtn><FaVideo size={20} color="#fff" /></DockBtn>
            <DockBtn><CopyStack /></DockBtn>
            <DockBtn><FaCog size={20} color="#fff" /></DockBtn>
          </ToolDock>
          <BrainBtn><BrainIcon /></BrainBtn>
        </Preview>
      </Main>
    </Page>
  );
}
